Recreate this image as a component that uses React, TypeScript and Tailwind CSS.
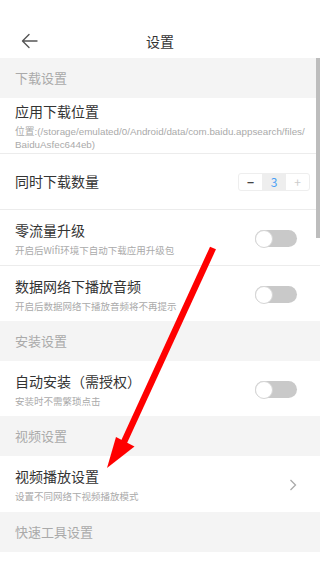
const Toggle = () => (
  <div className="relative w-[42px] h-[17px] rounded-full bg-[#c9c9c9]">
    <div className="absolute left-0 top-[-0.5px] w-[18px] h-[18px] rounded-full bg-white border border-[#d6d6d6]" />
  </div>
);

const Section = ({ title }: { title: string }) => (
  <div className="h-[40px] bg-[#f4f4f4] px-[15px] flex items-center text-[13px] text-[#aaaaaa]">
    {title}
  </div>
);

const Row = ({
  title,
  sub,
  right,
  last,
}: {
  title: string;
  sub: string;
  right?: React.ReactNode;
  last?: boolean;
}) => (
  <div
    className={`flex items-center justify-between pl-[15px] pr-[23px] pt-[10px] pb-[8px] ${
      last ? '' : 'border-b border-[#ececec]'
    }`}
  >
    <div className="flex flex-col">
      <div className="text-[14px] leading-[20px] text-[#333333]">{title}</div>
      <div className="mt-[3px] text-[9.5px] leading-[14px] text-[#aaaaaa]">{sub}</div>
    </div>
    {right}
  </div>
);

export default function App() {
  return (
    <div
      className="relative w-[320px] h-[569px] overflow-hidden bg-white"
      style={{ fontFamily: '"Noto Sans CJK SC", "Noto Sans", sans-serif' }}
    >
      {/* Header */}
      <div className="h-[58px] pt-[24px] bg-white">
        <div className="relative h-[34px] flex items-center justify-center">
          <svg
            className="absolute left-[21px] top-[9px]"
            width="17"
            height="16"
            viewBox="0 0 17 16"
            fill="none"
            stroke="#555"
            strokeWidth="1.4"
            strokeLinecap="round"
            strokeLinejoin="round"
          >
            <path d="M16 8H2M8 1.5L1.5 8 8 14.5" />
          </svg>
          <span className="text-[14px] text-[#333333]">设置</span>
        </div>
      </div>

      <Section title="下载设置" />

      <div className="pl-[15px] pr-[12px] pt-[3px] pb-[2px] border-b border-[#ececec]">
        <div className="text-[14px] leading-[20px] text-[#333333]">应用下载位置</div>
        <div
          className="mt-[4px] text-[9.8px] leading-[13px] text-[#aaaaaa]"
          style={{ fontFamily: '"Liberation Sans", "Noto Sans CJK SC", sans-serif' }}
        >
          位置:(/storage/emulated/0/Android/data/com.baidu.appsearch/files/
          <br />
          BaiduAsfec644eb)
        </div>
      </div>

      <div className="h-[56px] flex items-center justify-between pl-[15px] pr-[10px] border-b border-[#ececec]">
        <div className="text-[14px] text-[#333333]">同时下载数量</div>
        <div className="flex h-[18px] border border-[#eeeeee] rounded-[3px] overflow-hidden text-[12px]">
          <div className="w-[23px] flex items-center justify-center text-[#444] font-bold">−</div>
          <div className="w-[24px] flex items-center justify-center bg-[#eeeeee] text-[#4a9ff5]">3</div>
          <div className="w-[23px] flex items-center justify-center text-[#cccccc]">+</div>
        </div>
      </div>

      <Row title="零流量升级" sub="开启后Wifi环境下自动下载应用升级包" right={<Toggle />} />
      <Row title="数据网络下播放音频" sub="开启后数据网络下播放音频将不再提示" right={<Toggle />} last />

      <Section title="安装设置" />
      <Row title="自动安装（需授权）" sub="安装时不需繁琐点击" right={<Toggle />} last />

      <Section title="视频设置" />
      <Row
        title="视频播放设置"
        sub="设置不同网络下视频播放模式"
        last
        right={
          <svg width="8" height="12" viewBox="0 0 8 12" fill="none" stroke="#aaaaaa" strokeWidth="1.3">
            <path d="M1.5 1l5 5-5 5" />
          </svg>
        }
      />

      <div className="pt-[1px]">
        <Section title="快速工具设置" />
      </div>

      {/* Scrollbar */}
      <div className="absolute right-0 top-[58px] w-[4px] h-[180px] bg-[#bdbdbd]" />

      {/* Red annotation arrow */}
      <svg className="absolute left-0 top-0" width="320" height="569" viewBox="0 0 320 569">
        <line x1="213" y1="248" x2="124" y2="442" stroke="#ff0000" strokeWidth="6.5" />
        <polygon points="107,468 116,437 134.5,446.5" fill="#ff0000" />
      </svg>
    </div>
  );
}
